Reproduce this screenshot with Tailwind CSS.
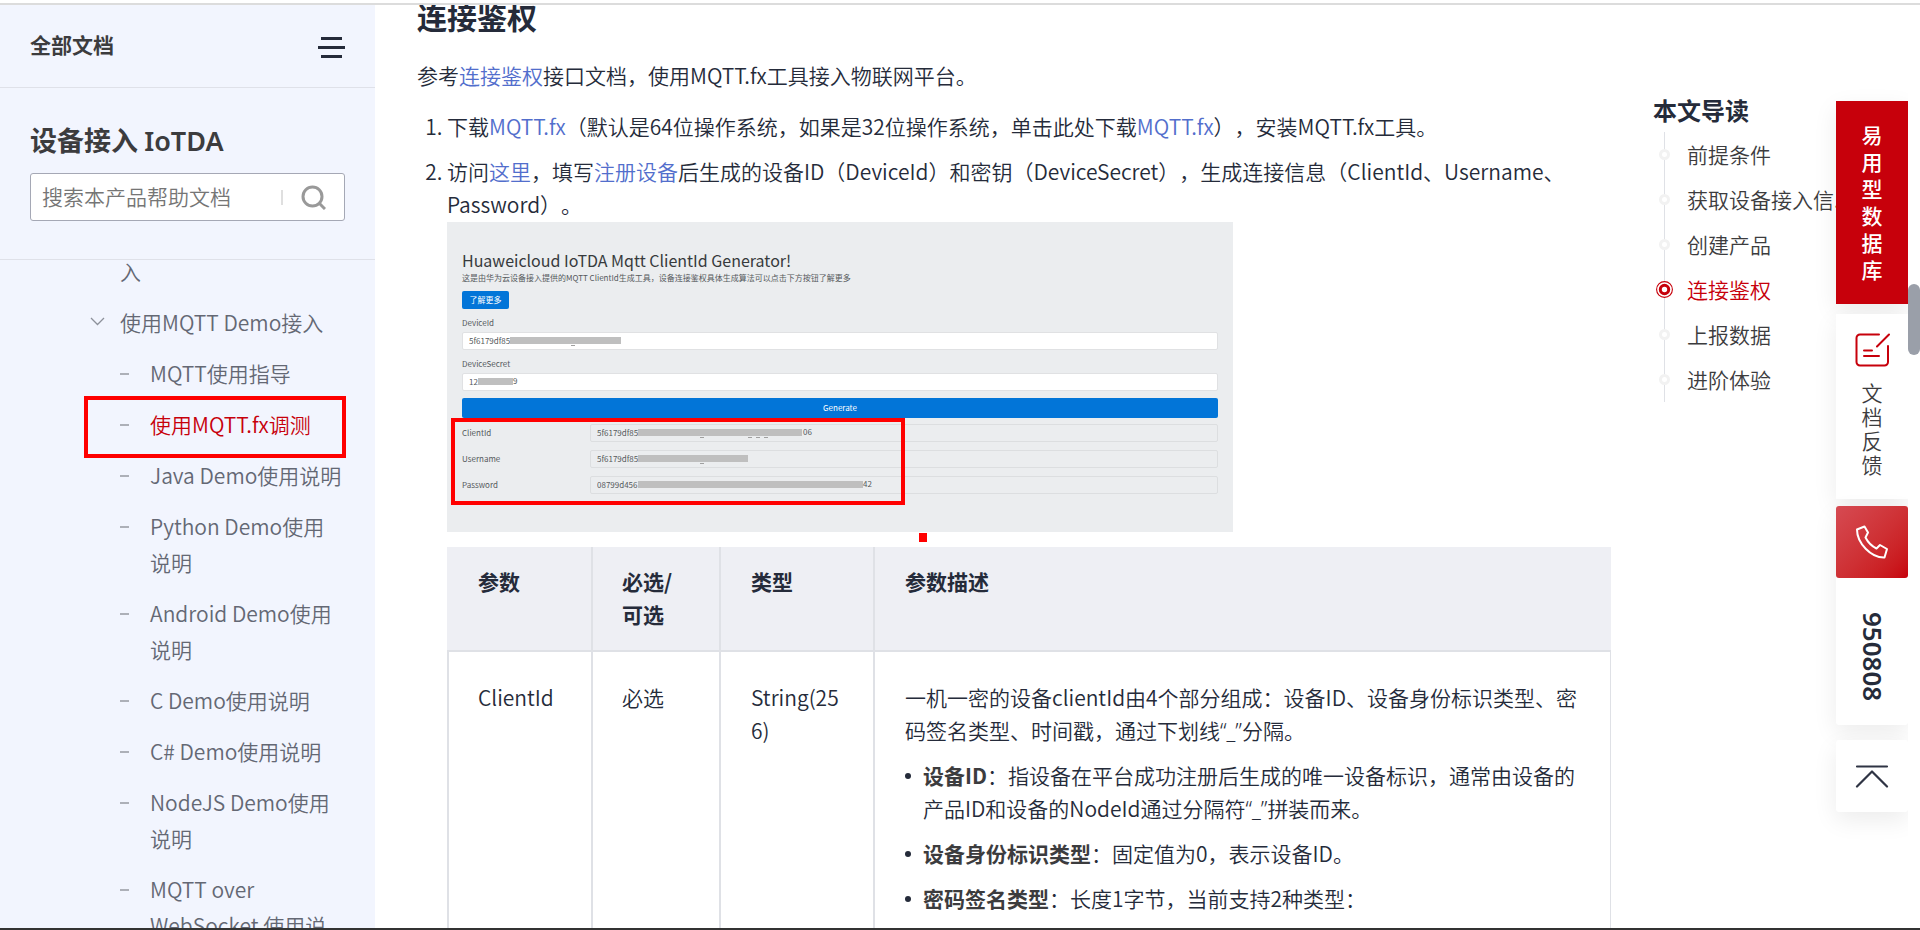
<!DOCTYPE html>
<html lang="zh-CN">
<head>
<meta charset="utf-8">
<title>连接鉴权 - 设备接入 IoTDA</title>
<script src="https://cdn.jsdelivr.net/npm/@tailwindcss/browser@4"></script>
</head>
<body class="flex h-screen flex-col overflow-hidden bg-white font-['Noto_Sans_CJK_SC',sans-serif] text-[21px] leading-[33px] font-[350] text-[#252b3a] [text-spacing-trim:space-all]">
<div class="h-[5px] shrink-0 border-b-2 border-[#dcdcdc]"></div>
<div class="flex min-h-0 flex-1">

  <!-- Sidebar -->
  <aside class="flex w-[375px] shrink-0 flex-col bg-[#f2f5fe]">
    <div class="flex h-[83px] shrink-0 items-center justify-between border-b border-[#dfe1e9] px-[30px] pb-1">
      <a href="#" class="font-bold text-[#3c3c3e]">全部文档</a>
      <button type="button" aria-label="菜单" class="flex flex-col items-center gap-[6px] pt-1.5">
        <span class="h-[3px] w-[21px] bg-[#252b3a]"></span>
        <span class="h-[3px] w-[27px] bg-[#252b3a]"></span>
        <span class="h-[3px] w-[21px] bg-[#252b3a]"></span>
      </button>
    </div>
    <div class="shrink-0 border-b border-[#dfe1e9] px-[30px] pt-[31px] pb-[38px]">
      <h1 class="text-[27px] leading-[42px] font-bold text-[#3c3c3e]">设备接入 <span class="font-['Noto_Sans',sans-serif] text-[27px] leading-none font-semibold">IoTDA</span></h1>
      <form class="mt-3 flex h-12 items-center rounded-[3px] border border-[#a5a8b5] bg-white pr-[18px] pl-[11px]">
        <input type="text" aria-label="搜索" placeholder="搜索本产品帮助文档" class="min-w-0 flex-1 pb-0.5 outline-none placeholder:text-[#757575]">
        <span class="mr-[18px] h-[15px] w-0.5 bg-[#dfdfdf]"></span>
        <button type="button" aria-label="搜索按钮">
          <svg width="25" height="25" viewBox="0 0 25 25" fill="none" stroke="#999" stroke-width="3"><circle cx="11.5" cy="11.5" r="9.5"/><path d="M18 18l6 6"/></svg>
        </button>
      </form>
    </div>
    <nav class="min-h-0 flex-1 overflow-hidden leading-9 text-[#646874]">
      <ul class="-mt-[7px] flex flex-col gap-[15px] pr-8 pl-[120px]">
        <li><a href="#">入</a></li>
        <li class="relative"><svg class="absolute top-3 -left-[30px]" width="15" height="12" viewBox="0 0 15 12" fill="none" stroke="#8d919b" stroke-width="1.3"><path d="M1 2l6.500 6.500L14 2"/></svg><a href="#">使用MQTT Demo接入</a></li>
        <li class="flex gap-[21px]"><span class="mt-[18px] h-0.5 w-[9px] shrink-0 bg-[#adb0b8]"></span><a href="#">MQTT使用指导</a></li>
        <li class="relative flex gap-[21px]"><span class="absolute -top-[10px] -left-9 h-[62px] w-[262px] border-4 border-[#ff0000]"></span><span class="mt-[18px] h-0.5 w-[9px] shrink-0 bg-[#adb0b8]"></span><a href="#" class="text-[#c7000b]">使用MQTT.fx调测</a></li>
        <li class="flex gap-[21px]"><span class="mt-[18px] h-0.5 w-[9px] shrink-0 bg-[#adb0b8]"></span><a href="#" class="whitespace-nowrap">Java Demo使用说明</a></li>
        <li class="flex gap-[21px]"><span class="mt-[18px] h-0.5 w-[9px] shrink-0 bg-[#adb0b8]"></span><a href="#">Python Demo使用<br>说明</a></li>
        <li class="flex gap-[21px]"><span class="mt-[18px] h-0.5 w-[9px] shrink-0 bg-[#adb0b8]"></span><a href="#">Android Demo使用<br>说明</a></li>
        <li class="flex gap-[21px]"><span class="mt-[18px] h-0.5 w-[9px] shrink-0 bg-[#adb0b8]"></span><a href="#">C Demo使用说明</a></li>
        <li class="flex gap-[21px]"><span class="mt-[18px] h-0.5 w-[9px] shrink-0 bg-[#adb0b8]"></span><a href="#">C# Demo使用说明</a></li>
        <li class="flex gap-[21px]"><span class="mt-[18px] h-0.5 w-[9px] shrink-0 bg-[#adb0b8]"></span><a href="#">NodeJS Demo使用<br>说明</a></li>
        <li class="flex gap-[21px]"><span class="mt-[18px] h-0.5 w-[9px] shrink-0 bg-[#adb0b8]"></span><a href="#">MQTT over<br>WebSocket 使用说<br>明</a></li>
      </ul>
    </nav>
  </aside>

  <!-- Article -->
  <main class="min-w-0 flex-1 overflow-hidden pl-[42px]">
    <h2 class="-mt-[11px] text-[30px] leading-[44px] font-bold">连接鉴权</h2>
    <p class="mt-[21px]">参考<a href="#" class="text-[#526ecc]">连接鉴权</a>接口文档，使用MQTT.fx工具接入物联网平台。</p>
    <ol class="mt-[18px] flex list-decimal flex-col gap-3 pl-[30px]">
      <li>下载<a href="#" class="text-[#526ecc]">MQTT.fx</a>（默认是64位操作系统，如果是32位操作系统，单击此处下载<a href="#" class="text-[#526ecc]">MQTT.fx</a>），安装MQTT.fx工具。</li>
      <li>访问<a href="#" class="text-[#526ecc]">这里</a>，填写<a href="#" class="text-[#526ecc]">注册设备</a>后生成的设备ID（DeviceId）和密钥（DeviceSecret），生成连接信息（ClientId、Username、Password）。

        <!-- Generator form -->
        <div class="relative mt-px h-[310px] w-[786px] bg-[#ebedef] px-[15px] pt-[26px] text-[8px] leading-3 font-normal text-[#55595c]">
          <h3 class="text-[16px] leading-6 text-[#373a3c]">Huaweicloud IoTDA Mqtt ClientId Generator!</h3>
          <p>这是由华为云设备接入提供的MQTT ClientId生成工具，设备连接鉴权具体生成算法可以点击下方按钮了解更多</p>
          <button type="button" class="mt-[7px] block h-[18px] w-[47px] rounded-[2px] bg-[#0275d8] text-white">了解更多</button>
          <label for="did" class="mt-2 block">DeviceId</label>
          <div class="relative mt-[3px]">
            <input id="did" value="5f6179df85" class="block h-[18px] w-full rounded-[2px] border border-[#e0e1e3] bg-white px-1.5 pb-0.5">
            <span class="absolute top-[5px] left-12 h-[7px] w-[111px] bg-[#bfbfbf]"></span><span class="absolute top-[13px] left-[109px] h-px w-1 bg-[#a0a0a0]"></span>
          </div>
          <label for="dsec" class="mt-2 block">DeviceSecret</label>
          <div class="relative mt-[3px]">
            <input id="dsec" value="12" class="block h-[18px] w-full rounded-[2px] border border-[#e0e1e3] bg-white px-1.5 pb-0.5">
            <span class="absolute top-[5px] left-4 h-[7px] w-[35px] bg-[#bfbfbf]"></span><span class="absolute top-[2px] left-[51px]">9</span>
          </div>
          <button type="button" class="mt-[7px] block h-5 w-full rounded-[2px] bg-[#0275d8] text-white">Generate</button>
          <div class="mt-1.5 flex flex-col gap-2">
            <div class="flex items-center"><label for="cid" class="w-[128px]">ClientId</label>
              <div class="relative flex-1"><input id="cid" readonly value="5f6179df85" class="block h-[18px] w-full rounded-[2px] border border-[#dcdee0] px-1.5 pb-0.5">
              <span class="absolute top-[5px] left-12 h-[7px] w-[164px] bg-[#bfbfbf]"></span><span class="absolute top-[13px] left-[110px] h-px w-1 bg-[#a0a0a0]"></span><span class="absolute top-[13px] left-[158px] h-px w-1 bg-[#a0a0a0]"></span><span class="absolute top-[13px] left-[166px] h-px w-1 bg-[#a0a0a0]"></span><span class="absolute top-[13px] left-[174px] h-px w-1 bg-[#a0a0a0]"></span><span class="absolute top-[2px] left-[213px]">06</span></div></div>
            <div class="flex items-center"><label for="usr" class="w-[128px]">Username</label>
              <div class="relative flex-1"><input id="usr" readonly value="5f6179df85" class="block h-[18px] w-full rounded-[2px] border border-[#dcdee0] px-1.5 pb-0.5">
              <span class="absolute top-[5px] left-12 h-[7px] w-[110px] bg-[#bfbfbf]"></span><span class="absolute top-[13px] left-[110px] h-px w-1 bg-[#a0a0a0]"></span></div></div>
            <div class="flex items-center"><label for="pwd" class="w-[128px]">Password</label>
              <div class="relative flex-1"><input id="pwd" readonly value="08799d456" class="block h-[18px] w-full rounded-[2px] border border-[#dcdee0] px-1.5 pb-0.5">
              <span class="absolute top-[5px] left-12 h-[7px] w-[225px] bg-[#bfbfbf]"></span><span class="absolute top-[2px] left-[273px]">42</span></div></div>
          </div>
          <span class="absolute top-[196px] left-1 h-[87px] w-[454px] border-4 border-[#ff0000]"></span>
          <span class="absolute top-[311px] left-[472px] h-[9px] w-2 bg-[#ff0000]"></span>
        </div>

        <table class="mt-[15px] w-full table-fixed border-separate border-spacing-0 text-left">
          <colgroup><col class="w-[146px]"><col class="w-[128px]"><col class="w-[154px]"><col></colgroup>
          <thead class="bg-[#eeeff4] align-top">
            <tr>
              <th class="border-r-2 border-b-2 border-[#dfe1e6] px-[31px] pt-[18px] pb-[19px] font-bold">参数</th>
              <th class="border-r-2 border-b-2 border-[#dfe1e6] px-[29px] pt-[18px] pb-[19px] font-bold">必选/<br>可选</th>
              <th class="border-r-2 border-b-2 border-[#dfe1e6] px-[30px] pt-[18px] pb-[19px] font-bold">类型</th>
              <th class="border-b-2 border-[#dfe1e6] px-[30px] pt-[18px] pb-[19px] font-bold">参数描述</th>
            </tr>
          </thead>
          <tbody class="align-top">
            <tr>
              <td class="border-x-2 border-[#dfe1e6] px-[29px] pt-[29px]">ClientId</td>
              <td class="border-r-2 border-[#dfe1e6] px-[29px] pt-[29px]">必选</td>
              <td class="border-r-2 border-[#dfe1e6] px-[30px] pt-[29px] break-all">String(256)</td>
              <td class="border-r border-[#dfe1e6] px-[30px] pt-[29px] pb-12">
                <p>一机一密的设备clientId由4个部分组成：设备ID、设备身份标识类型、密码签名类型、时间戳，通过下划线<span class="font-['Noto_Sans',sans-serif] leading-none">“_”</span>分隔。</p>
                <ul class="mt-3 flex flex-col gap-3">
                  <li class="flex gap-3"><span class="mt-[14px] size-1.5 shrink-0 rounded-full bg-[#252b3a]"></span><span><b class="font-bold text-[#3c3c3e]">设备ID</b>：指设备在平台成功注册后生成的唯一设备标识，通常由设备的产品ID和设备的NodeId通过分隔符<span class="font-['Noto_Sans',sans-serif] leading-none">“_”</span>拼装而来。</span></li>
                  <li class="flex gap-3"><span class="mt-[14px] size-1.5 shrink-0 rounded-full bg-[#252b3a]"></span><span><b class="font-bold text-[#3c3c3e]">设备身份标识类型</b>：固定值为0，表示设备ID。</span></li>
                  <li class="flex gap-3"><span class="mt-[14px] size-1.5 shrink-0 rounded-full bg-[#252b3a]"></span><span><b class="font-bold text-[#3c3c3e]">密码签名类型</b>：长度1字节，当前支持2种类型：</span></li>
                </ul>
              </td>
            </tr>
          </tbody>
        </table>
      </li>
    </ol>
  </main>

  <!-- Table of contents -->
  <nav class="ml-[42px] w-[183px] shrink-0 pt-[87px] text-[#3c3c3e]">
    <h2 class="text-[24px] leading-9 font-bold text-[#252b3a]">本文导读</h2>
    <ul class="relative mt-1 ml-[11px] border-l border-[#dfe1e6] leading-[45px]">
      <li class="relative pl-[22px]"><span class="absolute top-[17px] -left-[6px] size-[11px] rounded-full border-[3px] border-[#f2f2f2] bg-white"></span><a href="#" class="block whitespace-nowrap">前提条件</a></li>
      <li class="relative pl-[22px]"><span class="absolute top-[17px] -left-[6px] size-[11px] rounded-full border-[3px] border-[#f2f2f2] bg-white"></span><a href="#" class="block whitespace-nowrap">获取设备接入信...</a></li>
      <li class="relative pl-[22px]"><span class="absolute top-[17px] -left-[6px] size-[11px] rounded-full border-[3px] border-[#f2f2f2] bg-white"></span><a href="#" class="block whitespace-nowrap">创建产品</a></li>
      <li class="relative pl-[22px]"><svg class="absolute top-[14px] -left-[9px]" width="17" height="17" viewBox="0 0 17 17" fill="#fff" stroke="#c7000b"><circle cx="8.500" cy="8.500" r="7.900" stroke-width="1.100"/><circle cx="8.500" cy="8.500" r="4.200" stroke-width="3"/></svg><a href="#" class="block whitespace-nowrap text-[#c7000b]">连接鉴权</a></li>
      <li class="relative pl-[22px]"><span class="absolute top-[17px] -left-[6px] size-[11px] rounded-full border-[3px] border-[#f2f2f2] bg-white"></span><a href="#" class="block whitespace-nowrap">上报数据</a></li>
      <li class="relative pl-[22px]"><span class="absolute top-[17px] -left-[6px] size-[11px] rounded-full border-[3px] border-[#f2f2f2] bg-white"></span><a href="#" class="block whitespace-nowrap">进阶体验</a></li>
    </ul>
  </nav>

  <!-- Side tools -->
  <div class="relative z-10 flex w-[72px] shrink-0 flex-col pt-24">
    <a href="#" class="flex h-[203px] flex-col items-center justify-center bg-[#c7000b] pb-0.5 leading-[27px] font-medium text-white shadow-[0_8px_24px_rgba(0,0,0,0.08)]"><span>易</span><span>用</span><span>型</span><span>数</span><span>据</span><span>库</span></a>
    <a href="#" class="mt-[10px] flex h-[185px] flex-col items-center bg-white pt-[19px] leading-6 text-[#3c3c3e] shadow-[0_8px_24px_rgba(0,0,0,0.08)]">
      <svg class="mb-[13px]" width="35" height="34" viewBox="0 0 35 34" fill="none" stroke="#c7000b" stroke-width="2" stroke-linecap="round"><path d="M24 1.500H5a3.500 3.500 0 0 0-3.500 3.500v24A3.500 3.500 0 0 0 5 32.500h24.500a3.500 3.500 0 0 0 3.500-3.500V13M34 1.500L22 13.500M9 17.500h8M9 23h15"/></svg>
      <span>文</span><span>档</span><span>反</span><span>馈</span>
    </a>
    <div class="mt-[7px] flex h-[219px] flex-col rounded-[3px] bg-white shadow-[0_8px_24px_rgba(0,0,0,0.08)]">
      <button type="button" aria-label="电话" class="flex size-[72px] items-center justify-center rounded-[3px] bg-linear-to-br from-[#d64a52] to-[#c7000b]">
        <svg width="34" height="34" viewBox="0 0 34 34" fill="none" stroke="#fff" stroke-width="2" stroke-linejoin="round"><path d="M2 4.500L9.500 1.500 13 7.500 10.500 12.500C13 17.500 16.500 21 21.500 23.500L25 20 32 24 29.500 32.500C16 33 2 18 2 4.500z"/></svg>
      </button>
      <div class="flex flex-1 items-center justify-center pt-2.5"><a href="#" class="font-['Noto_Sans',sans-serif] text-[26px] font-semibold [writing-mode:vertical-rl]">950808</a></div>
    </div>
    <button type="button" aria-label="返回顶部" class="mt-[15px] flex h-[72px] w-full items-center justify-center rounded-[3px] bg-white shadow-[0_8px_24px_rgba(0,0,0,0.08)]">
      <svg width="34" height="24" viewBox="0 0 34 24" fill="none" stroke="#2f3444" stroke-width="2.200" stroke-linecap="round" stroke-linejoin="round"><path d="M2 2.500h30M2 22.500L17 7.500l15 15"/></svg>
    </button>
  </div>
  <div class="relative z-20 w-3 shrink-0 bg-white pt-[279px]"><div class="h-[71px] rounded-full bg-[#9a9fa9]"></div></div>
</div>
<div class="h-0.5 shrink-0 bg-[#333]"></div>
</body>
</html>
